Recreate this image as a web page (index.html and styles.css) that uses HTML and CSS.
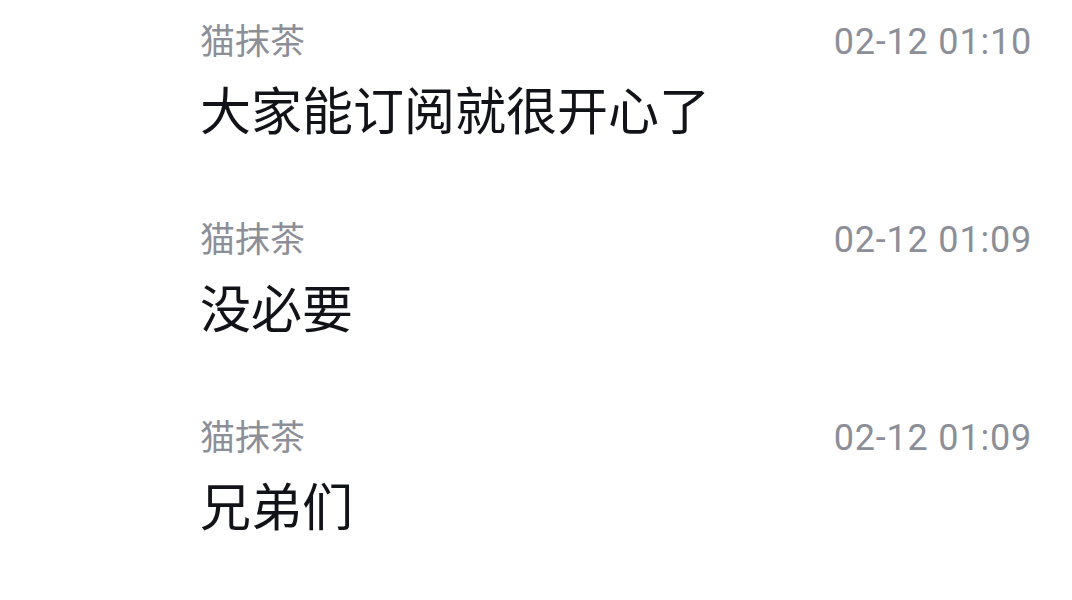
FILE: index.html
```html
<!DOCTYPE html>
<html lang="zh-CN">
<head>
    <meta charset="UTF-8">
    <meta name="viewport" content="width=device-width, initial-scale=1.0">
    <title>评论</title>
    <link rel="stylesheet" href="styles.css">
</head>
<body>
    <div class="comment-list">
        <div class="comment">
            <div class="comment-head">
                <span class="name">猫抹茶</span>
                <span class="time">02-12 01:10</span>
            </div>
            <div class="text">大家能订阅就很开心了</div>
        </div>
        <div class="comment">
            <div class="comment-head">
                <span class="name">猫抹茶</span>
                <span class="time">02-12 01:09</span>
            </div>
            <div class="text">没必要</div>
        </div>
        <div class="comment">
            <div class="comment-head">
                <span class="name">猫抹茶</span>
                <span class="time">02-12 01:09</span>
            </div>
            <div class="text">兄弟们</div>
        </div>
    </div>
</body>
</html>
```

FILE: styles.css
```css
body {
    margin: 0;
    padding: 0;
    background-color: #fff;
    font-family: "Noto Sans CJK SC", "Noto Sans", sans-serif;
    color: #141414;
}

.comment-list {
    padding: 15px 40px 0 200px;
    display: flex;
    flex-direction: column;
    gap: 75px;
}

.comment-head {
    display: flex;
    justify-content: space-between;
    align-items: baseline;
    height: 48px;
    line-height: 48px;
    color: #8c8f98; /* gris */
    font-size: 35px;
}

.time {
    font-family: Roboto, "Noto Sans CJK SC", sans-serif;
    font-size: 36px;
    letter-spacing: 0.8px;
}

.text {
    margin-top: 15px;
    height: 60px;
    line-height: 60px;
    font-size: 51px;
    color: #121318;
}
```
